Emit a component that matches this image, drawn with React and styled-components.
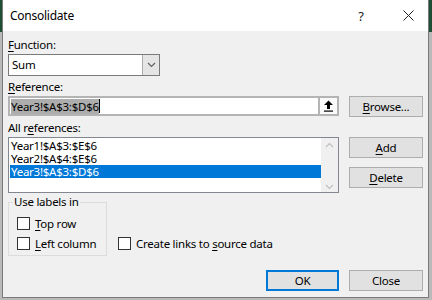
import React from "react";
import styled, { createGlobalStyle } from "styled-components";

const GlobalStyle = createGlobalStyle`
  html, body {
    margin: 0;
    padding: 0;
  }
  body {
    background: #1f4e35;
    font-family: "Noto Sans", "Open Sans", sans-serif;
    font-size: 11.5px;
    letter-spacing: -0.25px;
    color: #000;
  }
`;

const Page = styled.div`
  width: 432px;
  height: 300px;
  overflow: hidden;
  background: linear-gradient(#1f4e35 0 32px, #b9b9b9 32px);
`;

const Dialog = styled.div`
  box-sizing: border-box;
  margin-left: 2px;
  width: 427px;
  height: 298px;
  background: #f0f0f0;
  border: 1px solid #7a7a7a;
  border-top: none;
  display: flex;
  flex-direction: column;
`;

const TitleBar = styled.div`
  height: 31px;
  background: #fff;
  display: flex;
  align-items: center;
  padding-left: 7px;
`;

const Title = styled.div`
  flex: 1;
  font-size: 12px;
  margin-top: -1px;
`;

const TitleButton = styled.div`
  width: ${(p) => p.$w}px;
  height: 31px;
  display: flex;
  align-items: center;
  justify-content: center;
  font-size: 13px;
  color: #222;
`;

const Body = styled.div`
  display: grid;
  grid-template-columns: 331px 74px;
  column-gap: 10px;
  padding: 6px 5px 0 5px;
`;

const Label = styled.div`
  grid-column: 1 / 3;
  height: 16px;
  line-height: 16px;
  margin-top: ${(p) => p.$top || 0}px;
  margin-bottom: 1px;
`;

const Key = styled.span`
  text-decoration: underline;
  text-underline-offset: 2px;
`;

const Select = styled.div`
  grid-column: 1 / 3;
  box-sizing: border-box;
  width: 152px;
  height: 22px;
  display: flex;
  border: 1px solid #7a7a7a;
  background: #fff;
`;

const SelectValue = styled.div`
  flex: 1;
  padding-left: 3px;
  line-height: 20px;
`;

const SelectArrow = styled.div`
  width: 16px;
  border-left: 1px solid #adadad;
  background: #e5e5e5;
  display: flex;
  align-items: center;
  justify-content: center;
`;

const RefInput = styled.div`
  box-sizing: border-box;
  height: 20px;
  display: flex;
  border: 2px solid #b4b4b4;
  background: #fff;
`;

const RefText = styled.div`
  flex: 1;
  display: flex;
  align-items: center;
  padding-left: 1px;
`;

const Selected = styled.span`
  background: #adadad;
  line-height: 15px;
`;

const Caret = styled.span`
  width: 1px;
  height: 14px;
  background: #000;
`;

const CollapseButton = styled.div`
  box-sizing: border-box;
  width: 19px;
  border-left: 2px solid #b4b4b4;
  display: flex;
  align-items: center;
  justify-content: center;
  background: #fafafa;
`;

const Button = styled.div`
  box-sizing: border-box;
  width: ${(p) => p.$w || 74}px;
  height: 21px;
  margin-top: ${(p) => p.$top || 0}px;
  background: #e1e1e1;
  border: ${(p) => (p.$default ? "2px solid #0078d7" : "1px solid #adadad")};
  display: flex;
  align-items: center;
  justify-content: center;
`;

const ListBox = styled.div`
  box-sizing: border-box;
  height: 56px;
  border: 1px solid #828790;
  background: #fff;
  display: flex;
`;

const Items = styled.div`
  flex: 1;
  padding: 1px 0 0 1px;
`;

const Item = styled.div`
  height: 13px;
  line-height: 13px;
  padding-left: 1px;
  background: ${(p) => (p.$active ? "#0078d7" : "transparent")};
  color: ${(p) => (p.$active ? "#fff" : "#000")};
`;

const ScrollBar = styled.div`
  width: 17px;
  background: #f0f0f0;
  display: flex;
  flex-direction: column;
  justify-content: space-between;
  align-items: center;
  padding: 4px 0 2px;
`;

const ButtonStack = styled.div`
  display: flex;
  flex-direction: column;
`;

const Bottom = styled.div`
  display: flex;
  align-items: flex-end;
  padding: 1px 0 0 5px;
`;

const Group = styled.fieldset`
  box-sizing: border-box;
  width: 99px;
  margin: 0;
  padding: 5px 0 4px 8px;
  border: 1px solid #dcdcdc;
  display: flex;
  flex-direction: column;
  gap: 4px;
`;

const Legend = styled.legend`
  padding: 0 1px;
  margin-left: -4px;
  line-height: 16px;
`;

const Check = styled.label`
  display: flex;
  align-items: center;
  gap: 5px;
  height: 16px;
  margin-left: ${(p) => p.$left || 0}px;
  margin-bottom: ${(p) => p.$bottom || 0}px;
`;

const Box = styled.span`
  box-sizing: border-box;
  width: 13px;
  height: 13px;
  border: 1px solid #333;
  background: #fff;
`;

const Footer = styled.div`
  display: flex;
  justify-content: flex-end;
  gap: 10px;
  padding: 14px 5px 0 0;
`;

const Chevron = ({ up, color = "#606060" }) => (
  <svg width="9" height="6" viewBox="0 0 9 6">
    <path
      d={up ? "M1 5 L4.5 1.5 L8 5" : "M1 1 L4.5 4.5 L8 1"}
      fill="none"
      stroke={color}
      strokeWidth="1.2"
    />
  </svg>
);

export default function App() {
  return (
    <Page>
      <GlobalStyle />
      <Dialog>
        <TitleBar>
          <Title>Consolidate</Title>
          <TitleButton $w={54}>?</TitleButton>
          <TitleButton $w={40}>
            <svg width="11" height="11" viewBox="0 0 11 11">
              <path d="M0.5 0.5 L10.5 10.5 M10.5 0.5 L0.5 10.5" stroke="#222" strokeWidth="1" />
            </svg>
          </TitleButton>
        </TitleBar>

        <Body>
          <Label>
            <Key>F</Key>unction:
          </Label>
          <Select>
            <SelectValue>Sum</SelectValue>
            <SelectArrow>
              <Chevron />
            </SelectArrow>
          </Select>

          <Label $top={3}>
            <Key>R</Key>eference:
          </Label>
          <RefInput>
            <RefText>
              <Selected>Year3!$A$3:$D$6</Selected>
              <Caret />
            </RefText>
            <CollapseButton>
              <svg width="11" height="12" viewBox="0 0 11 12">
                <path d="M5.5 0.5 L10 5 L7 5 L7 9 L4 9 L4 5 L1 5 Z" fill="#000" />
                <rect x="1" y="10.5" width="9" height="1.2" fill="#000" />
              </svg>
            </CollapseButton>
          </RefInput>
          <Button>
            <span>
              <Key>B</Key>rowse...
            </span>
          </Button>

          <Label $top={3}>
            All r<Key>e</Key>ferences:
          </Label>
          <ListBox>
            <Items>
              <Item>Year1!$A$3:$E$6</Item>
              <Item>Year2!$A$4:$E$6</Item>
              <Item $active>Year3!$A$3:$D$6</Item>
            </Items>
            <ScrollBar>
              <Chevron up color="#c0c0c0" />
              <Chevron color="#c0c0c0" />
            </ScrollBar>
          </ListBox>
          <ButtonStack>
            <Button>
              <span>
                <Key>A</Key>dd
              </span>
            </Button>
            <Button $top={9}>
              <span>
                <Key>D</Key>elete
              </span>
            </Button>
          </ButtonStack>
        </Body>

        <Bottom>
          <Group>
            <Legend>Use labels in</Legend>
            <Check>
              <Box />
              <span>
                <Key>T</Key>op row
              </span>
            </Check>
            <Check>
              <Box />
              <span>
                <Key>L</Key>eft column
              </span>
            </Check>
          </Group>
          <Check $left={11} $bottom={5}>
            <Box />
            <span>
              Create links to <Key>s</Key>ource data
            </span>
          </Check>
        </Bottom>

        <Footer>
          <Button $default $w={73}>OK</Button>
          <Button>Close</Button>
        </Footer>
      </Dialog>
    </Page>
  );
}
